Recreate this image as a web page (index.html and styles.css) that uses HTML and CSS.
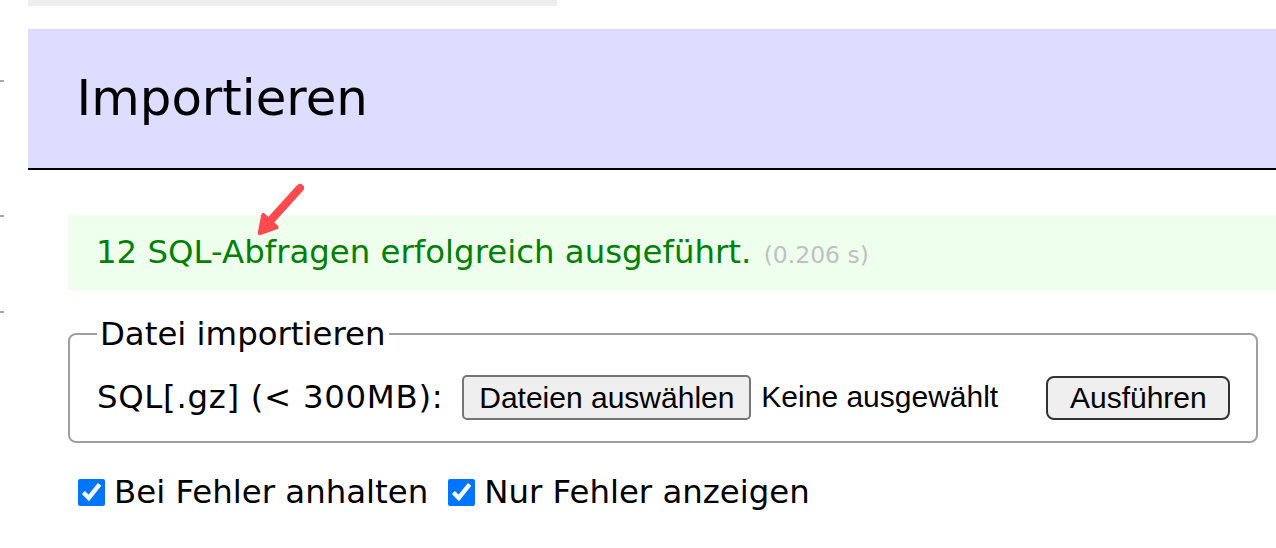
FILE: index.html
```html
<!DOCTYPE html>
<html lang="de">
<head>
<meta charset="utf-8">
<title>Importieren</title>
<link rel="stylesheet" href="styles.css">
</head>
<body>
<div class="page">
  <div class="rail">
    <div class="tick tick-1"></div>
    <div class="tick tick-2"></div>
    <div class="tick tick-3"></div>
  </div>
  <div class="main">
    <div class="topbar"></div>
    <h2 class="title">Importieren</h2>
    <div class="body">
      <div class="message">12 SQL-Abfragen erfolgreich ausgeführt. <span class="time">(0.206 s)</span></div>
      <fieldset class="import">
        <legend>Datei importieren</legend>
        <div class="row">
          <span class="label">SQL[.gz] (&lt; 300MB):</span>
          <button type="button" class="file-btn">Dateien auswählen</button>
          <span class="file-name">Keine ausgewählt</span>
          <button type="submit" class="submit">Ausführen</button>
        </div>
      </fieldset>
      <p class="opts">
        <label class="opt"><input type="checkbox" checked>Bei Fehler anhalten</label>
        <label class="opt"><input type="checkbox" checked>Nur Fehler anzeigen</label>
      </p>
    </div>
    <svg class="arrow" width="70" height="70" viewBox="0 0 70 70" aria-hidden="true">
      <line x1="50" y1="9" x2="21" y2="41" stroke="#ff4a4f" stroke-width="8" stroke-linecap="round"/>
      <polygon points="10,54 13.4,36.3 26.2,48.1" fill="#ff4a4f" stroke="#ff4a4f" stroke-width="4.5" stroke-linejoin="round"/>
    </svg>
  </div>
</div>
</body>
</html>
```

FILE: styles.css
```css
html, body {
  margin: 0;
  padding: 0;
  background: #fff;
}

body {
  font-family: "DejaVu Sans", Verdana, sans-serif;
  font-size: 32.4px;
  line-height: 40.5px;
  color: #000;
  overflow: hidden;
  width: 1276px;
  height: 548px;
}

.page {
  display: grid;
  grid-template-columns: 28px 1fr;
}

.rail {
  display: flex;
  flex-direction: column;
}

.tick {
  width: 4px;
  height: 2px;
  background: #a8a8a8;
}

.tick-1 { margin-top: 80px; }
.tick-2 { margin-top: 133px; }
.tick-3 { margin-top: 94px; }

.main {
  position: relative;
}

.topbar {
  width: 529px;
  height: 6px;
  background: #eee;
  margin-bottom: 23px;
}

.title {
  margin: 0 0 45px 0;
  padding: 39.4px 48.6px 38.4px;
  background: #ddf;
  border-bottom: 2.25px solid #000;
  font-size: 49.8px;
  line-height: 60.75px;
  font-weight: normal;
}

.body {
  display: flex;
  flex-direction: column;
  align-items: flex-start;
  padding-left: 40px;
}

.message {
  align-self: stretch;
  background: #efe;
  color: #008000;
  padding: 17px 25.9px 15px 28px;
}

.time {
  color: #c0c0c0;
  font-size: 23.5px;
  margin-left: 2px;
}

.import {
  margin: 23.5px 0 0 0;
  padding: 0 25.9px 16.2px;
  border: 2px solid #a0a0a0;
  border-radius: 8px;
  min-width: 0;
}

.import legend {
  padding: 0 3px;
  margin-left: 1px;
}

.row {
  display: flex;
  align-items: center;
  height: 55px;
  padding-top: 16px;
}

.label {
  margin-left: 1px;
  letter-spacing: 0.7px;
}

.file-btn,
.submit {
  font-family: "Liberation Sans", Arial, sans-serif;
  font-size: 30px;
  line-height: 34px;
  color: #000;
  background: #efefef;
  height: 45px;
  box-sizing: border-box;
  padding: 0;
  white-space: nowrap;
  text-align: center;
}

.file-btn {
  margin-left: 19px;
  border: 2px solid #767676;
  border-radius: 5px;
  width: 289px;
}

.file-name {
  font-family: "Liberation Sans", Arial, sans-serif;
  font-size: 30px;
  margin-left: 10px;
  width: 285px;
  white-space: nowrap;
}

.submit {
  border: 2px solid #333;
  border-radius: 8px;
  width: 184px;
  height: 44px;
}

.opts {
  display: flex;
  align-items: center;
  margin: 29px 0 0 0;
}

.opt {
  display: flex;
  align-items: center;
  margin-right: 10px;
}

.opt input {
  width: 27px;
  height: 27px;
  margin: 0 9px 0 10px;
  accent-color: #0075ff;
}

.arrow {
  position: absolute;
  left: 222px;
  top: 179px;
}
```
